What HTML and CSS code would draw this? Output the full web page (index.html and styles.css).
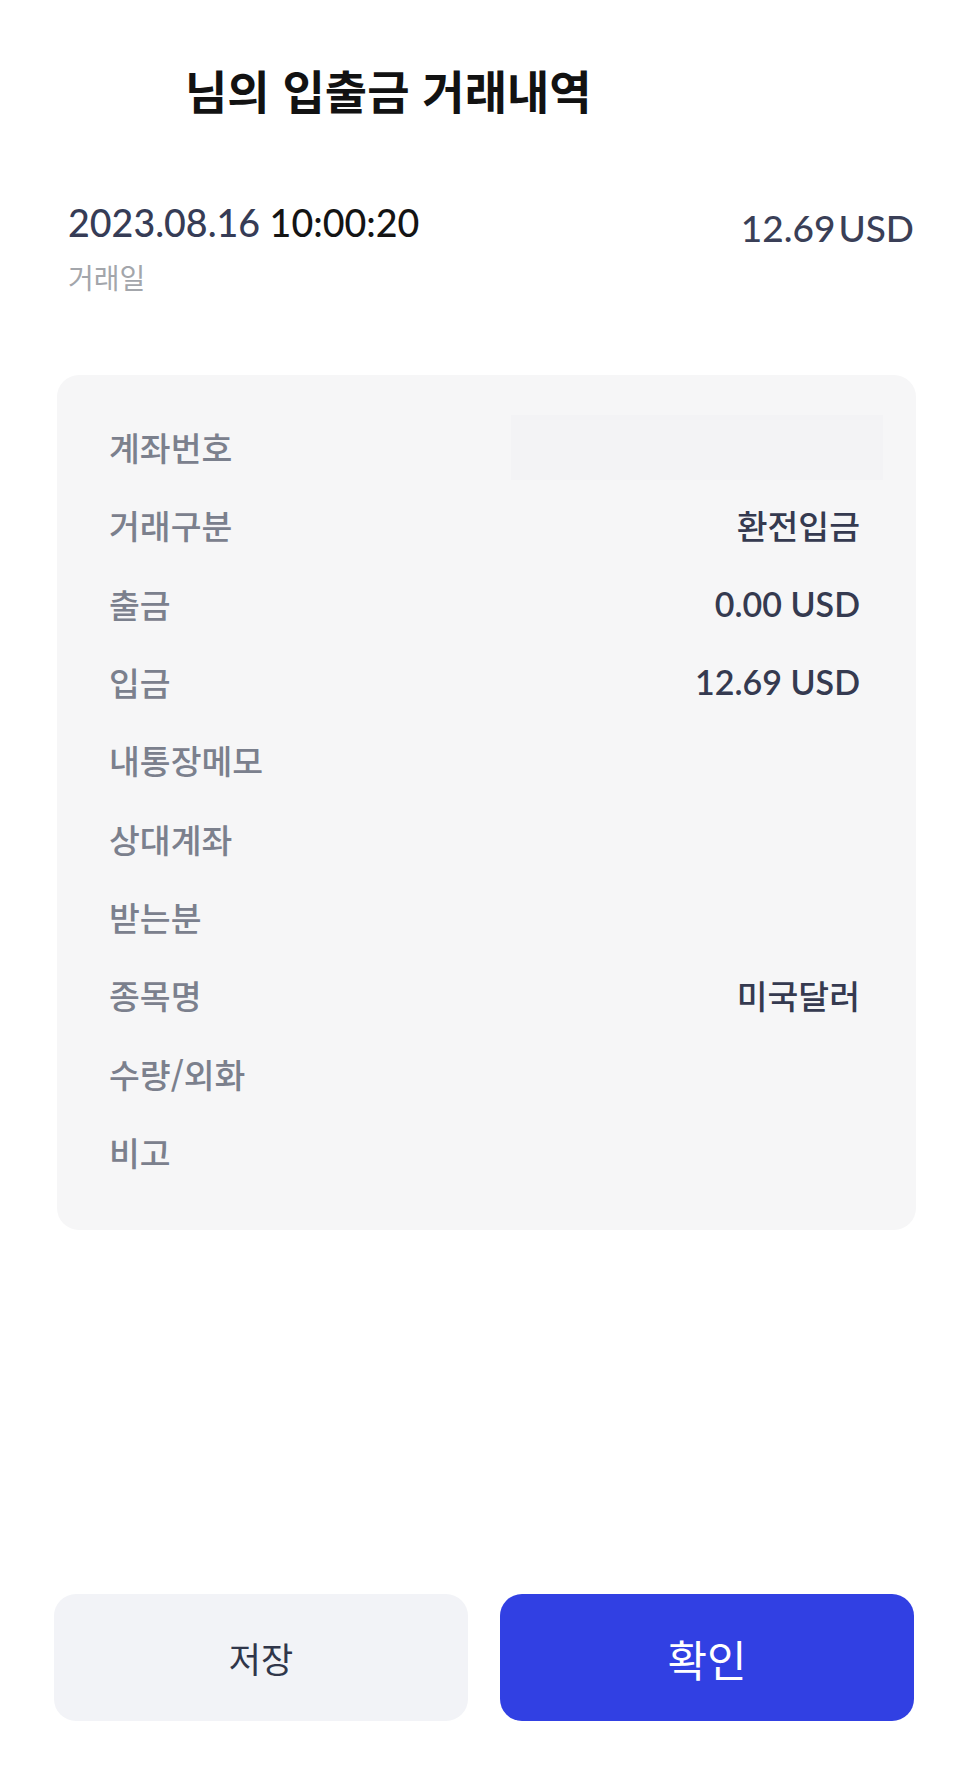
FILE: index.html
```html
<!DOCTYPE html>
<html lang="ko">
<head>
<meta charset="utf-8">
<title>입출금 거래내역</title>
<link rel="stylesheet" href="styles.css">
</head>
<body>
<div class="page">
  <header class="header">
    <h1 class="title"><span class="name"></span>님의 입출금 거래내역</h1>
  </header>

  <section class="summary">
    <div class="when">
      <div class="date"><span class="day">2023.08.16</span> <span class="time">10:00:20</span></div>
      <div class="date-label">거래일</div>
    </div>
    <div class="amount">12.69<span class="cur">USD</span></div>
  </section>

  <section class="card">
    <div class="row"><span class="label">계좌번호</span><span class="masked"></span></div>
    <div class="row"><span class="label">거래구분</span><span class="val">환전입금</span></div>
    <div class="row"><span class="label">출금</span><span class="val num">0.00 USD</span></div>
    <div class="row"><span class="label">입금</span><span class="val num">12.69 USD</span></div>
    <div class="row"><span class="label">내통장메모</span><span class="val"></span></div>
    <div class="row"><span class="label">상대계좌</span><span class="val"></span></div>
    <div class="row"><span class="label">받는분</span><span class="val"></span></div>
    <div class="row"><span class="label">종목명</span><span class="val">미국달러</span></div>
    <div class="row"><span class="label">수량/외화</span><span class="val"></span></div>
    <div class="row"><span class="label">비고</span><span class="val"></span></div>
  </section>

  <div class="actions">
    <button class="btn btn-save" type="button">저장</button>
    <button class="btn btn-ok" type="button">확인</button>
  </div>
</div>
</body>
</html>
```

FILE: styles.css
```css
* {
  box-sizing: border-box;
}

html, body {
  margin: 0;
  padding: 0;
  background: #ffffff;
}

body {
  font-family: "Noto Sans CJK KR", "Noto Sans", sans-serif;
  color: #111111;
}

.page {
  min-height: 100vh;
  display: flex;
  flex-direction: column;
}

.header {
  padding: 59px 0 0 68px;
}

.title {
  margin: 0;
  font-size: 46px;
  line-height: 60px;
  font-weight: 700;
  color: #121212;
  white-space: nowrap;
}

.name {
  display: inline-block;
  width: 117px;
}

.summary {
  margin-top: 82px;
  display: flex;
  justify-content: space-between;
  align-items: flex-start;
  padding: 0 52px 0 68px;
}

.date {
  font-family: "Lato", "Noto Sans CJK KR", sans-serif;
  font-size: 37.6px;
  line-height: 44px;
  font-weight: 500;
  white-space: nowrap;
}

.day {
  color: #363c56;
}

.time {
  color: #141414;
}

.date-label {
  margin-top: 15px;
  font-size: 28px;
  line-height: 34px;
  color: #a3a6ab;
}

.amount {
  margin-top: 5px;
  font-family: "Lato", "Noto Sans CJK KR", sans-serif;
  font-size: 37px;
  line-height: 44px;
  font-weight: 500;
  color: #3a3f57;
  white-space: nowrap;
}

.cur {
  margin-left: 3px;
}

.card {
  margin: 81px 50px 0 57px;
  padding: 33px 56px 39px 52px;
  background: #f6f6f7;
  border-radius: 22px;
}

.row {
  height: 78.3px;
  display: flex;
  align-items: center;
  justify-content: space-between;
}

.label {
  font-size: 33.5px;
  line-height: 40px;
  font-weight: 500;
  color: #7b808d;
}

.val {
  font-size: 33.5px;
  line-height: 40px;
  font-weight: 500;
  color: #353a50;
}

.val.num {
  font-family: "Lato", "Noto Sans CJK KR", sans-serif;
  font-size: 34px;
  font-weight: 600;
}

.masked {
  width: 372px;
  height: 65px;
  margin-right: -23px;
  background: #f3f3f5;
}

.actions {
  margin-top: auto;
  padding: 0 52px 56px 54px;
  display: grid;
  grid-template-columns: 1fr 1fr;
  gap: 32px;
}

.btn {
  height: 127px;
  border: none;
  border-radius: 22px;
  font-family: "Noto Sans CJK KR", "Noto Sans", sans-serif;
  font-weight: 400;
  cursor: pointer;
}

.btn-save {
  background: #f2f3f7;
  color: #30364a;
  font-size: 35px;
}

.btn-ok {
  background: #3140e3;
  color: #ffffff;
  font-size: 43px;
}
```
